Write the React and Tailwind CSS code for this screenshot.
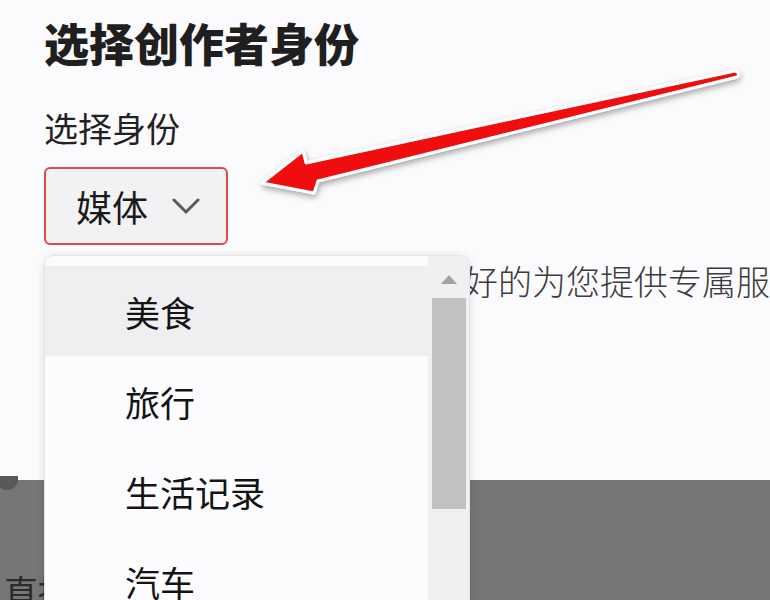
import React from "react";

const categories = ["美食", "旅行", "生活记录", "汽车"];

function Chevron() {
  return (
    <svg width="28" height="18" viewBox="0 0 28 18" fill="none">
      <polyline
        points="2,3 14,15 26,3"
        stroke="#5a595c"
        strokeWidth="3"
        strokeLinecap="round"
        strokeLinejoin="round"
      />
    </svg>
  );
}

function PointerArrow() {
  return (
    <svg
      className="absolute left-0 top-0 pointer-events-none"
      width="770"
      height="260"
      viewBox="0 0 770 260"
    >
      <defs>
        <filter id="arrowShadow" x="-10%" y="-30%" width="120%" height="160%">
          <feDropShadow dx="1" dy="3" stdDeviation="3" floodColor="#000" floodOpacity="0.35" />
        </filter>
      </defs>
      <path
        d="M262,183 L303,151 L306,163 L735,71 Q741,73 737,77 L318,181 L314,193 Z"
        fill="#f00a0a"
        stroke="#ffffff"
        strokeWidth="3"
        strokeLinejoin="round"
        filter="url(#arrowShadow)"
      />
    </svg>
  );
}

function CategoryMenu() {
  return (
    <div className="absolute left-[44px] top-[255px] w-[426px] h-[360px] flex rounded-t-[10px] border border-[#e4e3e6] bg-[#fcfbfd] shadow-[0_2px_10px_rgba(0,0,0,0.12)] overflow-hidden">
      <ul className="flex-1 pt-[10px]">
        {categories.map((name, i) => (
          <li
            key={name}
            className={
              "h-[90px] flex items-center pl-[80px] text-[35px] leading-none text-[#141414] " +
              (i === 0 ? "bg-[#efeef0]" : "")
            }
          >
            {name}
          </li>
        ))}
      </ul>
      <div className="w-[41px] bg-[#f0eff1] flex flex-col items-center">
        <div className="mt-[19px] w-0 h-0 border-l-[8px] border-r-[8px] border-b-[9px] border-l-transparent border-r-transparent border-b-[#a3a2a5]" />
        <div className="mt-[14px] w-[34px] h-[211px] bg-[#c1c0c2]" />
      </div>
    </div>
  );
}

export default function App() {
  return (
    <div
      className="relative w-[770px] h-[600px] overflow-hidden bg-[#fbfafc]"
      style={{ fontFamily: '"Noto Sans CJK SC", "Noto Sans", sans-serif' }}
    >
      <div className="pl-[44px] pt-[21px]">
        <h1 className="text-[45px] leading-[44px] font-black text-[#1f1f1f] whitespace-nowrap">
          选择创作者身份
        </h1>
        <p className="mt-[46px] text-[34px] leading-[34px] text-[#222]">选择身份</p>
        <button
          type="button"
          className="mt-[22px] w-[184px] h-[78px] flex items-center rounded-[6px] border-2 border-[#e04a4f] bg-[#f2f1f3] pl-[30px] gap-[24px]"
        >
          <span className="text-[36px] leading-none text-[#1a1a1a]">媒体</span>
          <Chevron />
        </button>
        <p className="mt-[19px] ml-[12px] text-[34px] leading-[34px] font-light text-[#3c3c3c] whitespace-nowrap">
          选择合适身份后，我们会更好的为您提供专属服务
        </p>
      </div>

      <div className="relative mt-[182px] h-[120px] bg-[#767577]">
        <span className="absolute left-[-4px] top-[-4px] w-[22px] h-[14px] rounded-b-full bg-[#58575a]" />
        <p className="pl-[4px] pt-[94px] text-[34px] leading-[34px] text-[#2a2a2a] whitespace-nowrap">
          直播
        </p>
      </div>

      <CategoryMenu />
      <PointerArrow />
    </div>
  );
}
